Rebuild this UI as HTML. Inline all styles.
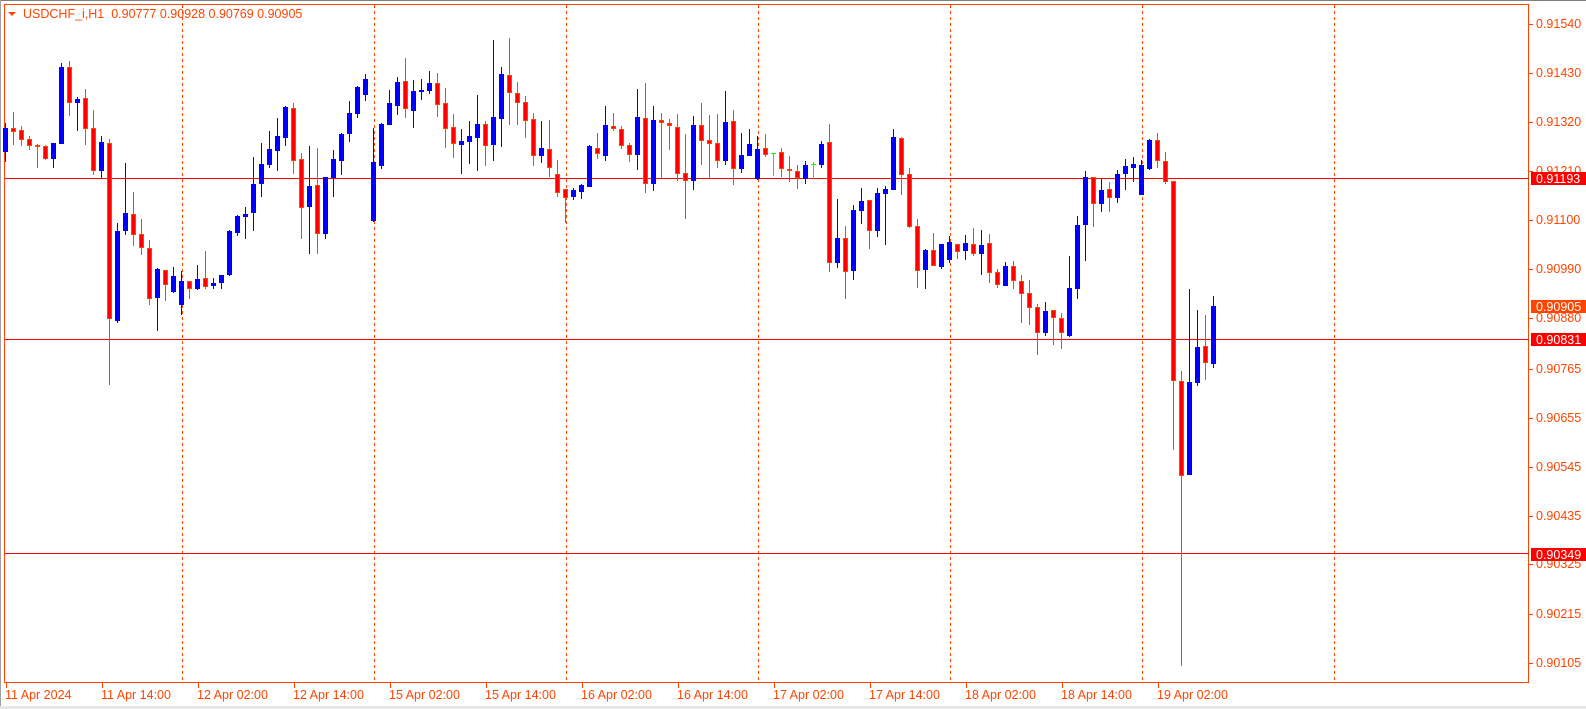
<!DOCTYPE html>
<html><head><meta charset="utf-8"><style>
html,body{margin:0;padding:0;background:#fff;width:1586px;height:709px;overflow:hidden}
svg{display:block}
text{font-family:"Liberation Sans",sans-serif}
</style></head><body>
<svg id="c" width="1586" height="709" xmlns="http://www.w3.org/2000/svg">
<rect x="0" y="0" width="1586" height="709" fill="#fff"/>
<rect x="0" y="0" width="1586" height="1" fill="#808080"/>
<rect x="0" y="0" width="1" height="706" fill="#a0a0a0"/>
<rect x="0" y="706" width="1586" height="3" fill="#e6e6e6"/>
<rect x="4.5" y="4.5" width="1524" height="678" fill="none" stroke="#ff4500" stroke-width="1"/>
<g id="dash" stroke="#ff4500" stroke-width="1" stroke-dasharray="3,3"></g>
<g id="hl"></g>
<g id="cd"></g>
<polygon points="8,12 16,12 12,16" fill="#ff4500"/>
<text x="23" y="18" font-size="12.5" fill="#ff4500" xml:space="preserve">USDCHF_i,H1  0.90777 0.90928 0.90769 0.90905</text>
<g id="ax" font-size="12.5" fill="#ff4500">
<text x="1536" y="28">0.91540</text>
<text x="1536" y="77">0.91430</text>
<text x="1536" y="126">0.91320</text>
<text x="1536" y="175">0.91210</text>
<text x="1536" y="224">0.91100</text>
<text x="1536" y="273">0.90990</text>
<text x="1536" y="322">0.90880</text>
<text x="1536" y="373">0.90765</text>
<text x="1536" y="422">0.90655</text>
<text x="1536" y="471">0.90545</text>
<text x="1536" y="520">0.90435</text>
<text x="1536" y="568">0.90325</text>
<text x="1536" y="618">0.90215</text>
<text x="1536" y="667">0.90105</text>
</g>
<g id="tk" fill="#ff4500"></g>
<rect x="1531" y="172" width="55" height="13" fill="#ff0000"/>
<text x="1536" y="183" font-size="12.5" fill="#fff">0.91193</text>
<rect x="1531" y="300" width="55" height="13" fill="#ff4500"/>
<text x="1536" y="311" font-size="12.5" fill="#fff">0.90905</text>
<rect x="1531" y="333" width="55" height="13" fill="#ff0000"/>
<text x="1536" y="344" font-size="12.5" fill="#fff">0.90831</text>
<rect x="1531" y="548" width="55" height="13" fill="#ff0000"/>
<text x="1536" y="559" font-size="12.5" fill="#fff">0.90349</text>
<g font-size="12.5" fill="#ff4500">
<text x="5" y="699">11 Apr 2024</text>
<text x="101" y="699">11 Apr 14:00</text>
<text x="197" y="699">12 Apr 02:00</text>
<text x="293" y="699">12 Apr 14:00</text>
<text x="389" y="699">15 Apr 02:00</text>
<text x="485" y="699">15 Apr 14:00</text>
<text x="581" y="699">16 Apr 02:00</text>
<text x="677" y="699">16 Apr 14:00</text>
<text x="773" y="699">17 Apr 02:00</text>
<text x="869" y="699">17 Apr 14:00</text>
<text x="965" y="699">18 Apr 02:00</text>
<text x="1061" y="699">18 Apr 14:00</text>
<text x="1157" y="699">19 Apr 02:00</text>
</g>
</svg>
<script>
var NS="http://www.w3.org/2000/svg";
function el(p,t,a){var e=document.createElementNS(NS,t);for(var k in a)e.setAttribute(k,a[k]);p.appendChild(e);return e;}
var dash=document.getElementById('dash');
[182,374,566,758,950,1142,1334].forEach(function(x){el(dash,'line',{x1:x+.5,y1:5,x2:x+.5,y2:683});});
var hl=document.getElementById('hl');
[178,339,553].forEach(function(y){el(hl,'rect',{x:5,y:y,width:1524,height:1,fill:'#ff0000'});});
var tk=document.getElementById('tk');
[24,73,122,171,220,269,318,369,418,467,516,564,614,663].forEach(function(y){el(tk,'rect',{x:1529,y:y,width:4,height:1});});
for(var i=0;i<13;i++)el(tk,'rect',{x:6+96*i,y:683,width:1,height:5});
var D="b 128 152 123 162|r 128 132 112 145|r 130 140 126 146|r 139 146 136 150|r 145 147 144 168|r 146 159 145 160|b 143 159 143 168|b 67 144 63 144|r 67 103 61 116|b 99 103 97 131|r 98 129 89 145|r 128 171 110 175|b 142 171 136 178|r 143 319 139 385|b 231 321 223 323|b 213 231 163 235|r 214 235 192 246|r 234 248 219 255|r 248 299 240 305|b 269 298 268 331|r 270 285 270 301|b 276 292 267 293|b 281 305 271 315|r 281 289 281 299|b 279 289 265 290|r 278 287 251 289|b 283 286 278 289|b 275 283 275 289|b 231 275 230 276|b 216 233 215 236|b 214 217 207 239|b 184 213 157 231|b 164 184 143 197|b 149 165 131 168|b 136 151 118 171|b 107 138 106 146|r 108 161 103 174|r 159 208 153 239|b 186 207 146 254|r 185 234 148 254|b 177 234 177 239|b 159 178 150 197|b 134 161 133 175|b 113 134 101 142|b 87 114 86 118|b 79 95 74 101|b 162 221 128 222|b 124 166 123 169|b 103 125 90 125|b 82 106 77 115|r 81 109 58 118|b 91 111 80 128|b 90 92 79 100|b 83 91 71 94|r 83 105 73 117|r 103 129 88 148|r 127 144 114 158|b 141 145 129 174|b 136 142 121 164|b 124 138 95 171|r 124 146 121 166|b 117 145 40 161|b 74 119 67 147|r 75 93 38 125|r 93 103 82 125|r 102 121 96 138|r 119 156 113 166|b 148 156 121 163|r 149 168 120 177|r 174 193 160 197|r 189 198 189 223|b 190 197 188 200|b 185 192 184 199|b 146 187 145 187|r 148 154 133 159|b 125 156 106 161|r 126 129 113 131|r 129 146 126 149|r 145 155 143 162|b 117 155 89 170|r 118 184 83 193|b 120 184 106 191|r 120 123 113 178|r 123 126 119 150|r 127 174 114 181|r 173 181 134 219|b 125 181 116 190|r 125 141 103 165|r 140 144 115 178|r 143 161 114 168|b 122 161 91 165|r 121 169 110 185|b 155 169 133 173|b 144 156 129 156|b 149 179 136 180|r 148 155 134 157|g 153 153 153 175|r 152 169 148 177|r 169 171 156 182|r 171 178 165 189|b 165 179 161 184|g 164 164 162 178|b 144 165 141 168|r 142 263 124 272|b 238 263 199 268|r 238 272 226 299|b 210 271 205 280|b 201 211 188 224|r 200 231 200 249|b 193 231 188 237|b 189 194 186 245|b 137 190 129 190|r 138 175 137 195|r 174 227 168 228|r 226 271 219 288|b 250 270 249 289|r 250 266 233 266|b 244 267 244 269|b 242 260 236 263|r 244 252 244 259|b 243 251 235 260|r 244 254 228 256|b 245 254 230 275|r 243 273 234 283|r 272 285 269 288|b 266 286 262 286|r 266 281 261 289|r 281 294 275 323|r 293 308 280 325|r 307 333 304 355|b 311 333 302 336|r 310 318 310 345|r 318 333 313 349|b 288 336 256 337|b 225 289 216 299|b 177 225 171 261|r 177 204 177 227|b 190 204 178 212|r 189 198 182 212|b 174 198 170 203|b 166 174 159 190|b 164 168 157 182|b 165 195 160 195|b 140 169 139 170|r 140 161 133 168|r 161 182 152 184|r 181 381 181 450|r 381 476 371 666|b 382 475 289 475|b 347 383 310 386|r 346 363 315 380|b 306 364 296 368";
var cd=document.getElementById('cd');
D.split('|').forEach(function(s,k){
 var p=s.split(' '),t=p[0],a=+p[1],b=+p[2],h=+p[3],l=+p[4],cx=5+8*k;
 if(t=='g'){el(cd,'rect',{x:cx,y:h,width:1,height:l-h+1,fill:'#00ff00'});el(cd,'rect',{x:cx-2,y:a,width:5,height:1,fill:'#00ff00'});return;}
 var wc=t=='b'?'#0000ff':'#ff4500';
 el(cd,'rect',{x:cx,y:h,width:1,height:Math.max(1,l-h),fill:wc});
 var hh=Math.max(2,b-a);
 if(t=='b'){el(cd,'rect',{x:cx-2,y:a,width:5,height:hh,fill:'#0000ff'});}
 else{el(cd,'rect',{x:cx-2,y:a,width:5,height:hh,fill:'#ff4500'});
  if(hh>2)el(cd,'rect',{x:cx-1,y:a+1,width:3,height:hh-2,fill:'#ff0000'});}
});
</script>
</body></html>
